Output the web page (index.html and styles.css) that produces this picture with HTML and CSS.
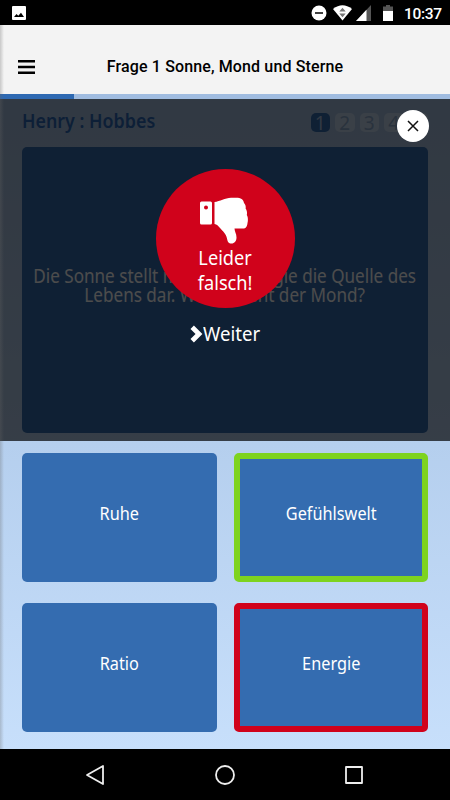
FILE: index.html
```
<!DOCTYPE html>
<html lang="de">
<head>
    <meta charset="UTF-8">
    <meta name="viewport" content="width=device-width, initial-scale=1.0">
    <title>Frage 1 Sonne, Mond und Sterne</title>
    <link rel="stylesheet" href="styles.css">
</head>
<body>

<div class="status-bar">
    <svg class="status-image" width="14" height="14" viewBox="0 0 14 14">
        <rect width="14" height="14" rx="1" fill="#fff"/>
        <path d="M2 11l2.500-3 1.800 1.800L9 6.800 12 11z" fill="#000"/>
    </svg>
    <div class="status-icons">
        <svg width="16" height="16" viewBox="0 0 16 16">
            <circle cx="8" cy="8" r="7.500" fill="#fff"/>
            <path d="M4 8h8" stroke="#000" stroke-width="1.500"/>
        </svg>
        <svg class="wifi" width="19" height="16" viewBox="0 0 19 16">
            <path d="M0 4Q9.500-3.500 19 4L9.500 15.500z" fill="#fff"/>
            <path d="M6.300 6.500l3.200-3.700 3.200 3.700zM6.300 8.500l3.200 3.700 3.200-3.700z" fill="#777"/>
        </svg>
        <svg class="signal" width="15" height="16" viewBox="0 0 15 16">
            <path d="M15 0v16H0z" fill="#555"/>
            <path d="M10.500 4.800V16H0z" fill="#fff"/>
        </svg>
        <svg class="battery" width="10" height="16" viewBox="0 0 10 16">
            <path d="M0 1.500h3V0h4v1.500h3V6H0z" fill="#555"/>
            <path d="M0 6h10v10H0z" fill="#fff"/>
        </svg>
        <span class="clock">10:37</span>
    </div>
</div>

<header class="header">
    <svg class="menu" width="17" height="14" viewBox="0 0 17 14">
        <path d="M0 1.200h17M0 7h17M0 12.800h17" stroke="#000" stroke-width="2.400"/>
    </svg>
    <h1>Frage 1 Sonne, Mond und Sterne</h1>
</header>
<div class="progress"><div class="progress-value"></div></div>

<main class="quiz">
    <section class="question-area">
        <div class="game-info">
            <h2>Henry : Hobbes</h2>
            <div class="steps">
                <span class="step active">1</span>
                <span class="step">2</span>
                <span class="step">3</span>
                <span class="step">4</span>
                <span class="step">5</span>
            </div>
        </div>
        <div class="question">
            <p>Die Sonne stellt mit ihrer Energie die Quelle des<br>Lebens dar. Wofür steht der Mond?</p>
        </div>
        <div class="overlay">
            <button class="close" aria-label="Schließen">
                <svg width="12" height="12" viewBox="0 0 12 12">
                    <path d="M1 1l10 10M11 1L1 11" stroke="#111" stroke-width="1.500"/>
                </svg>
            </button>
            <div class="result">
                <svg width="49" height="47" viewBox="0 0 49 47" fill="#fff">
                    <path fill-rule="evenodd" d="M2.500 4.500h9q1.500 0 1.500 1.500v20q0 1.500-1.500 1.500h-9Q1 27.500 1 26V6q0-1.500 1.500-1.500zM7 8.500a2 2 0 1 0 0 4 2 2 0 0 0 0-4z"/>
                    <path d="M15.500 5C21 4.500 26 1 32 .800h5c5 0 7.500 1.700 8 5.200 1.500 1.500 2 3.500 1.600 5.500 1.400 2 1.700 4 1.200 6.500 1.200 2 1.400 5 .700 8-.300 3.500-1.500 5.500-4.500 5.500h-8.500c0 3 2 5 2 9 0 3.500-2 6-5 6-3 0-4-2-4.500-5-1-5-4-7-7-10.500-2-2.500-3-3.500-5.500-4z"/>
                </svg>
                <p>Leider<br>falsch!</p>
            </div>
            <a href="#" class="next">
                <svg width="13" height="18" viewBox="0 0 13 18">
                    <path d="M2.200 2.200L9 9l-6.800 6.800" fill="none" stroke="#fff" stroke-width="4.800"/>
                </svg>
                <span>Weiter</span>
            </a>
        </div>
    </section>

    <section class="answers">
        <button class="answer"><span>Ruhe</span></button>
        <button class="answer right"><span>Gefühlswelt</span></button>
        <button class="answer"><span>Ratio</span></button>
        <button class="answer wrong"><span>Energie</span></button>
    </section>
</main>
<div class="drawer-shadow"></div>

<nav class="nav-bar">
    <svg width="20" height="22" viewBox="0 0 20 22">
        <path d="M18 2v18L2 11z"/>
    </svg>
    <svg width="20" height="20" viewBox="0 0 20 20">
        <circle cx="10" cy="10" r="9"/>
    </svg>
    <svg width="18" height="18" viewBox="0 0 18 18">
        <rect x="1" y="1" width="16" height="16"/>
    </svg>
</nav>

</body>
</html>
```
FILE: styles.css
```
:root {
    --primary-color: #346cb0;
    --right-color: #7ed31f;
    --wrong-color: #d0021b;
}

* {
    box-sizing: border-box;
}

body {
    position: relative;
    display: flex;
    flex-direction: column;
    width: 450px;
    height: 800px;
    margin: 0;
    overflow: hidden;
    font-family: 'Noto Sans', sans-serif;
    background: #000;
}

svg {
    display: block;
    flex: none;
}

button {
    padding: 0;
    border: 0;
    font: inherit;
}

/* Status bar */
.status-bar {
    display: flex;
    justify-content: space-between;
    align-items: center;
    height: 25px;
    padding: 0 8px 0 12px;
    color: #fff;
}

.status-icons {
    display: flex;
    align-items: center;
}

.wifi {
    margin-left: 6px;
}

.signal {
    margin-left: 4px;
}

.battery {
    margin-left: 12px;
}

.clock {
    width: 38px;
    margin-left: 11px;
    padding-top: 3px;
    font: 500 15.500px/25px Roboto, sans-serif;
    letter-spacing: -0.3px;
    white-space: nowrap;
}

/* Header */
.header {
    display: grid;
    grid-template-columns: 17px 1fr 17px;
    align-items: center;
    height: 69px;
    padding: 14px 18px 0;
    background: #f3f3f3;
}

h1 {
    margin: 0;
    font: 500 16px/20px Roboto, sans-serif;
    letter-spacing: 0.13px;
    text-align: center;
}

.progress {
    height: 5px;
    background: #a0bce0;
}

.progress-value {
    width: 74px;
    height: 100%;
    background: #2e69b2;
}

/* Quiz */
.quiz {
    height: 650px;
    background: linear-gradient(#a5bedf, #b5cfee 53%, #c7dffb);
}

.question-area {
    position: relative;
    height: 342px;
    padding: 10px 22px 0;
}

.game-info {
    display: flex;
    justify-content: space-between;
    height: 38px;
}

h2 {
    margin: 0;
    font-size: 19px;
    line-height: 25px;
    font-weight: 600;
    color: #2e6ab8;
    transform: scaleX(0.94);
    transform-origin: left;
}

.steps {
    display: flex;
    gap: 5px;
    padding-top: 4px;
}

.step {
    width: 19.500px;
    height: 19px;
    border-radius: 5px;
    background: #c3d6ee;
    color: #8aa8cc;
    font-size: 19px;
    line-height: 21px;
    text-align: center;
}

.step.active {
    background: var(--primary-color);
    color: #a5bedf;
}

.question {
    display: flex;
    align-items: center;
    justify-content: center;
    height: 286px;
    border-radius: 5px;
    background: var(--primary-color);
}

.question p {
    margin: 0;
    padding-bottom: 8px;
    font-size: 19px;
    line-height: 19.500px;
    text-align: center;
    white-space: nowrap;
    color: #fff;
    transform: scaleX(0.9);
}

/* Result overlay */
.overlay {
    position: absolute;
    inset: 0;
    display: flex;
    flex-direction: column;
    align-items: center;
    padding-top: 70px;
    background: rgba(0, 0, 0, 0.7);
    color: #fff;
}

.close {
    position: absolute;
    top: 11px;
    right: 21px;
    display: flex;
    align-items: center;
    justify-content: center;
    width: 32px;
    height: 32px;
    border-radius: 50%;
    background: #fff;
}

.result {
    display: flex;
    flex-direction: column;
    align-items: center;
    width: 139px;
    height: 139px;
    padding-top: 28px;
    border-radius: 50%;
    background: var(--wrong-color);
}

.result svg {
    margin-right: 3px;
}

.result p {
    margin: 1px 0 0;
    font-size: 20px;
    line-height: 25px;
    text-align: center;
    transform: scaleX(0.91);
}

.next {
    display: flex;
    align-items: center;
    margin-top: 12px;
    font-size: 20px;
    line-height: 28px;
    color: #fff;
    text-decoration: none;
}

.next span {
    margin-right: -4px;
    transform: scaleX(0.93);
    transform-origin: left;
}

/* Answers */
.answers {
    display: grid;
    grid-template-columns: 1fr 1fr;
    grid-auto-rows: 129px;
    gap: 21px 17px;
    padding: 12px 22px 0;
}

.answer {
    border-radius: 5px;
    background: var(--primary-color);
    color: #fff;
    font-size: 18.500px;
    line-height: 24px;
}

.answer span {
    display: block;
    padding-bottom: 10px;
    transform: scaleX(0.88);
}

.answer.right {
    border: 6px solid var(--right-color);
}

.answer.wrong {
    border: 6px solid var(--wrong-color);
}

/* Edge of the closed side menu */
.drawer-shadow {
    position: absolute;
    top: 25px;
    left: 0;
    width: 4px;
    height: 724px;
    background: linear-gradient(to right, rgba(100, 100, 100, 0.3), rgba(100, 100, 100, 0));
}

/* Android navigation */
.nav-bar {
    display: flex;
    justify-content: space-between;
    align-items: center;
    height: 51px;
    padding: 0 87px 0 85px;
}

.nav-bar svg {
    fill: none;
    stroke: #eee;
    stroke-width: 1.800;
    stroke-linejoin: round;
}
```
